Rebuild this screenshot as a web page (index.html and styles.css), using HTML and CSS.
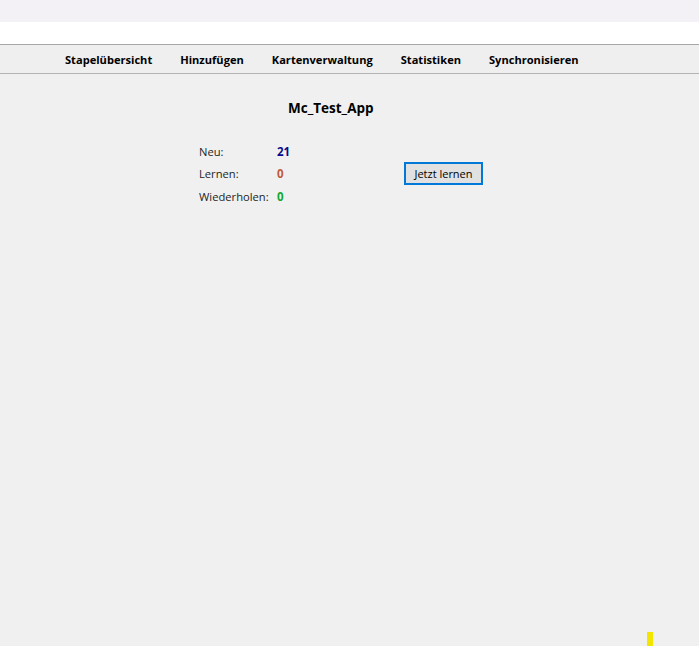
FILE: index.html
```html
<!DOCTYPE html>
<html lang="de">
<head>
<meta charset="utf-8">
<title>Mc_Test_App</title>
<link rel="stylesheet" href="styles.css">
</head>
<body>
<div class="topband"></div>
<div class="whiteband"></div>
<nav class="nav">
  <span class="nav-item">Stapelübersicht</span>
  <span class="nav-item">Hinzufügen</span>
  <span class="nav-item">Kartenverwaltung</span>
  <span class="nav-item">Statistiken</span>
  <span class="nav-item">Synchronisieren</span>
</nav>
<main class="main">
  <h1 class="title">Mc_Test_App</h1>
  <div class="stats">
    <span class="label">Neu:</span><span class="value new">21</span><span></span>
    <span class="label">Lernen:</span><span class="value learn">0</span><button class="btn">Jetzt lernen</button>
    <span class="label">Wiederholen:</span><span class="value review">0</span><span></span>
  </div>
</main>
<div class="marker"></div>
</body>
</html>
```
FILE: styles.css
```css
* { box-sizing: border-box; }
html, body { margin: 0; padding: 0; }
body {
  width: 699px;
  height: 646px;
  overflow: hidden;
  background: #f0f0f0;
  font-family: "Open Sans", "Noto Sans", sans-serif;
  color: #1a1a1a;
  position: relative;
}
.topband { height: 22px; background: #f3f1f5; }
.whiteband { height: 22px; background: #ffffff; }
.nav {
  height: 30px;
  border-top: 1px solid #a7a7a7;
  border-bottom: 1px solid #b4b4b4;
  background: #efefef;
  display: flex;
  align-items: center;
  gap: 28px;
  padding-left: 65px;
  font-size: 11.1px;
  font-weight: 700;
  color: #000;
}
.main { padding-left: 199px; }
.title {
  margin: 24px 0 0 89px;
  font-size: 13.5px;
  line-height: 20px;
  font-weight: 700;
  color: #000;
}
.stats {
  margin-top: 22px;
  display: grid;
  grid-template-columns: 78px 127px auto;
  grid-auto-rows: 22.5px;
  align-items: center;
  font-size: 11.2px;
  justify-items: start;
}
.label { color: #1f1f1f; }
.value { font-weight: 700; font-size: 11.5px; }
.new { color: #0a0a8c; }
.learn { color: #c05a3c; }
.review { color: #10a830; }
.btn {
  font-family: inherit;
  font-size: 11px;
  width: 79px;
  height: 23px;
  padding: 0;
  background: #e1e1e1;
  border: 1px solid #0078d7;
  box-shadow: inset 0 0 0 1px #0078d7;
  color: #000;
}
.marker {
  position: absolute;
  left: 647px;
  top: 632px;
  width: 6px;
  height: 14px;
  background: #f2e600;
}
```
